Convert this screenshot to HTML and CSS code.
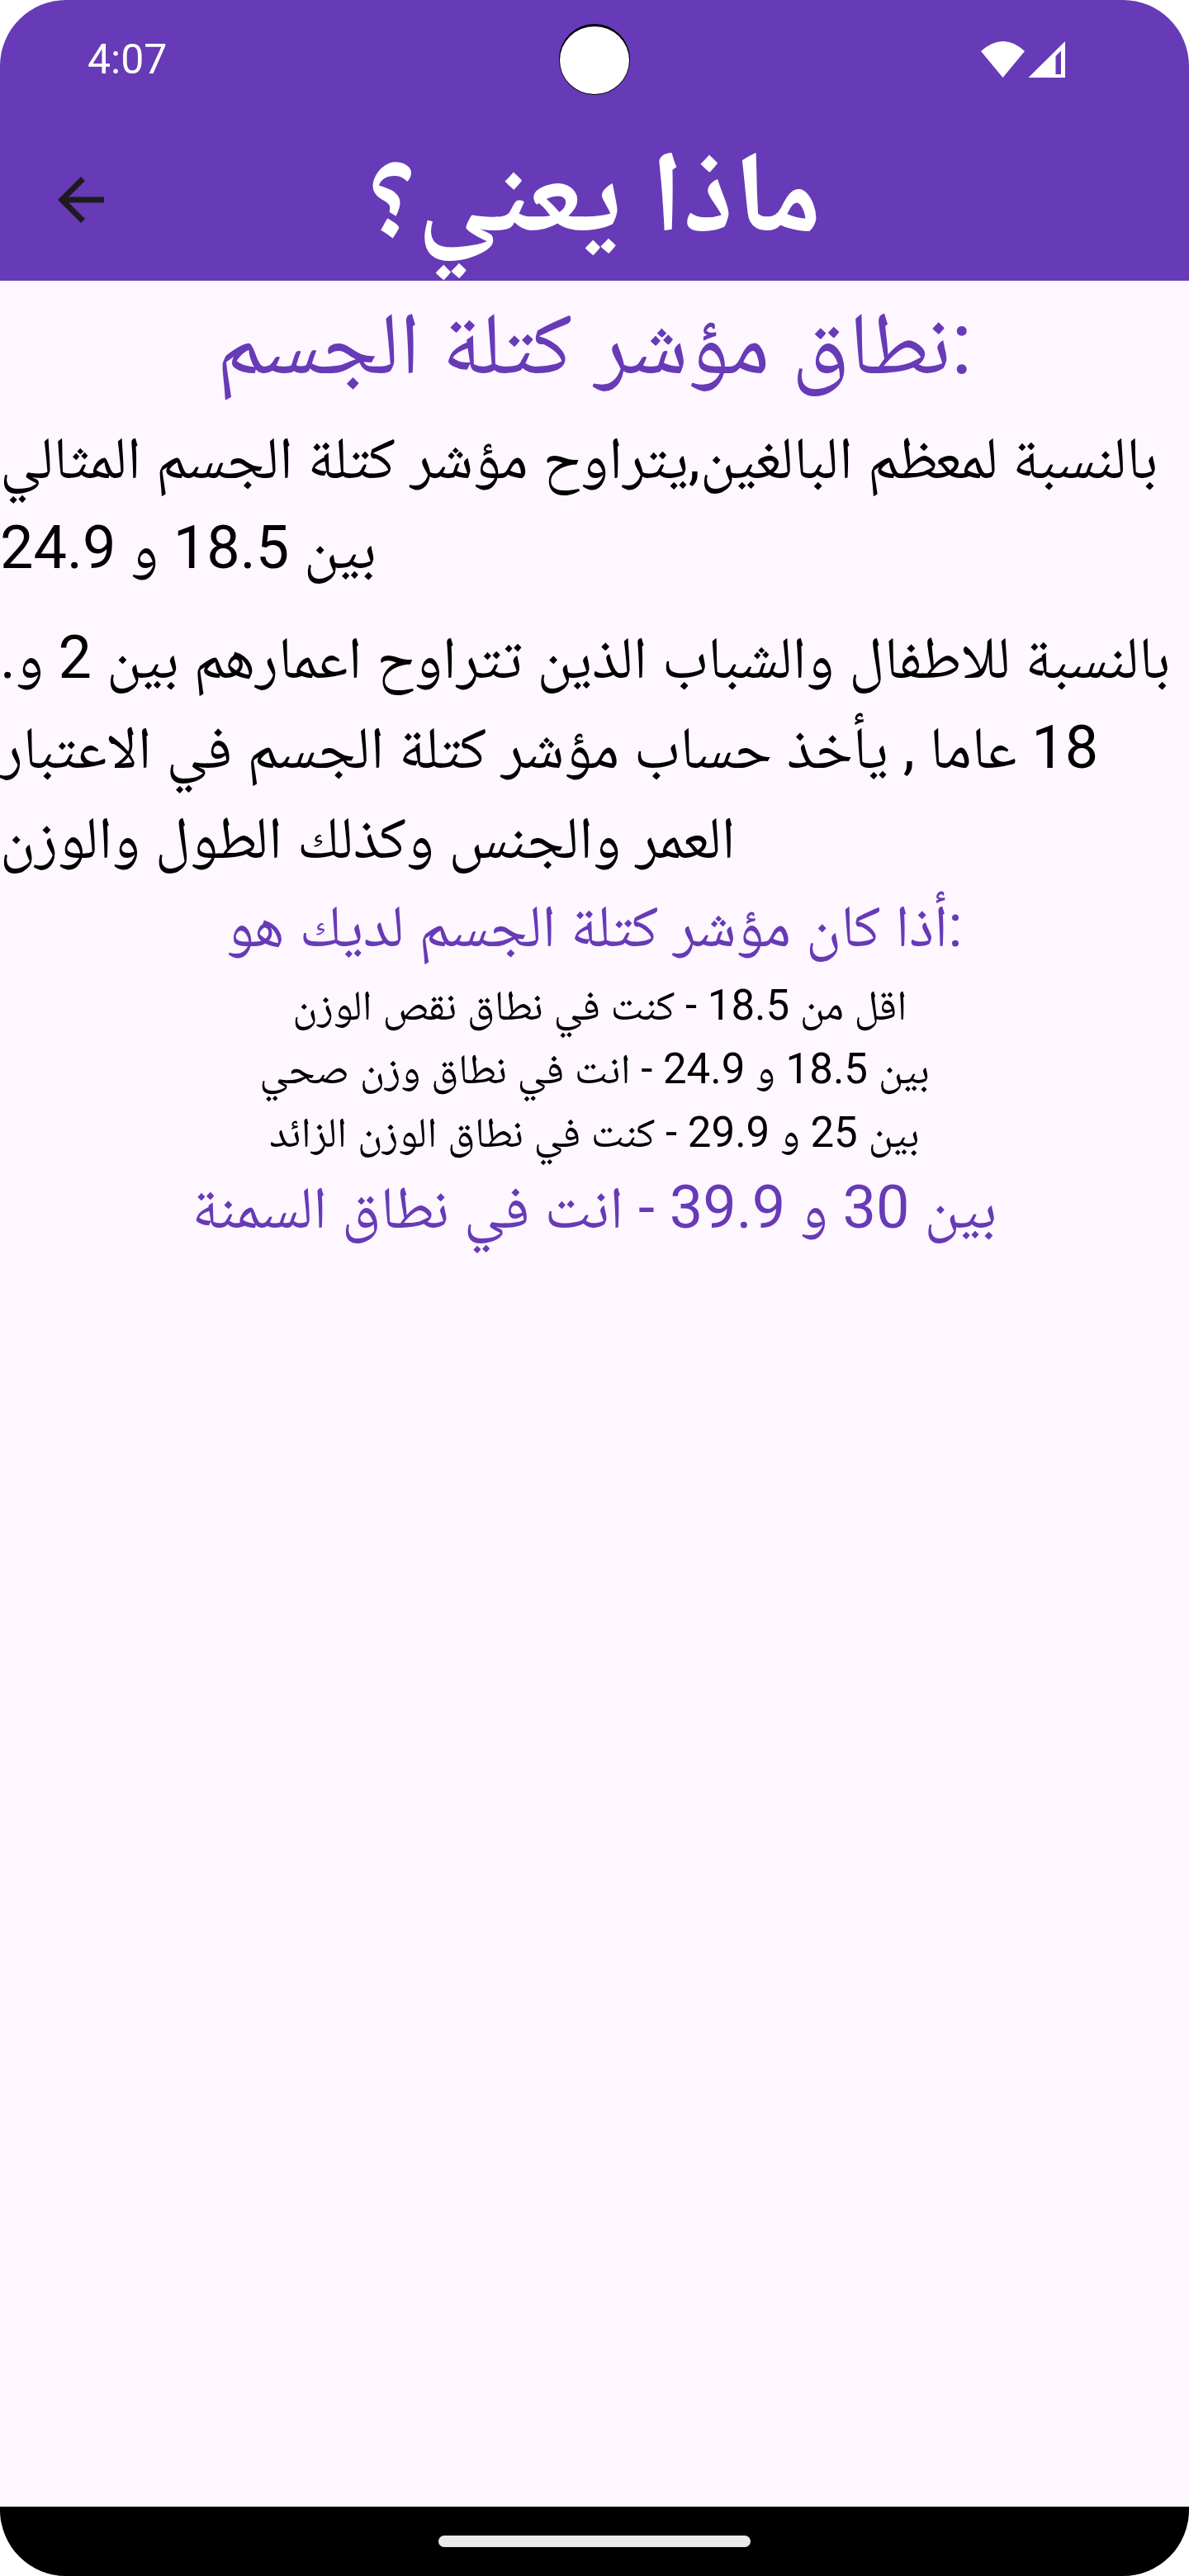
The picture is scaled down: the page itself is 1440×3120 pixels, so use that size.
FILE: index.html
```html
<!DOCTYPE html>
<html lang="ar">
<head>
<meta charset="utf-8">
<meta name="viewport" content="width=device-width, initial-scale=1">
<title>ماذا يعني؟</title>
<link rel="stylesheet" href="styles.css">
</head>
<body>
<div class="screen">
  <header class="header">
    <div class="status">
      <time class="clock">4:07</time>
      <svg class="camera" viewBox="0 0 86 86" aria-hidden="true">
        <circle cx="43" cy="43" r="43" fill="#000"/>
        <ellipse cx="43" cy="44" rx="42" ry="41" fill="#fff"/>
      </svg>
      <svg class="signals" viewBox="0 0 102 46" aria-hidden="true">
        <path fill="#fff" d="M0 13Q27-11 53 13L26.500 45Z"/>
        <path fill="#fff" fill-rule="evenodd" d="M57.500 45L102 1V45ZM90.500 19V41H97V12.500Z"/>
      </svg>
    </div>
    <div class="appbar">
      <button class="back" type="button" aria-label="رجوع">
        <svg viewBox="0 0 56 56" aria-hidden="true"><path fill="#1d1b20" d="M56 24.500H13.400L33 4.900L28 0L0 28L28 56L33 51.100L13.400 31.500H56Z"/></svg>
      </button>
      <h1 class="title">ماذا يعني؟</h1>
    </div>
  </header>
  <main class="content">
    <h2 class="heading">نطاق مؤشر كتلة الجسم:</h2>
    <p class="body">بالنسبة لمعظم البالغين,يتراوح مؤشر كتلة الجسم المثالي بين 18.5 و 24.9</p>
    <p class="body">.بالنسبة للاطفال والشباب الذين تتراوح اعمارهم بين 2 و 18 عاما , يأخذ حساب مؤشر كتلة الجسم في الاعتبار العمر والجنس وكذلك الطول والوزن</p>
    <h3 class="subheading">أذا كان مؤشر كتلة الجسم لديك هو:</h3>
    <ul class="ranges">
      <li>اقل من 18.5 - كنت في نطاق نقص الوزن&nbsp;</li>
      <li>بين 18.5 و 24.9 - انت في نطاق وزن صحي</li>
      <li>بين 25 و 29.9 - كنت في نطاق الوزن الزائد</li>
    </ul>
    <p class="subheading">بين 30 و 39.9 - انت في نطاق السمنة</p>
  </main>
  <footer class="navbar"><span class="handle"></span></footer>
</div>
</body>
</html>
```
FILE: styles.css
```css
* { box-sizing: border-box; margin: 0; padding: 0; }
body { background: #fff; color: #000; font-family: Roboto, "Noto Naskh Arabic", sans-serif; }
.screen { display: flex; flex-direction: column; min-height: 100vh; border-radius: 80px; overflow: hidden; background: #fef7ff; }
.header { background: #673ab7; color: #fff; overflow: hidden; }
.status { display: grid; grid-template-columns: 1fr auto 1fr; align-items: center; height: 144px; padding: 0 106px; }
.clock { font-size: 50px; }
.camera { width: 86px; height: 86px; }
.signals { width: 102px; height: 46px; justify-self: end; margin-right: 44px; }
.appbar { display: grid; grid-template-columns: 200px 1fr 200px; align-items: center; height: 196px; }
.back { width: 56px; height: 56px; margin-left: 70px; border: 0; background: none; }
.back svg { display: block; width: 56px; height: 56px; }
.title { align-self: start; direction: rtl; text-align: center; font-size: 140px; line-height: 176px; }
.content { flex: 1; }
.heading { margin-bottom: 9px; text-align: center; font-size: 107px; line-height: 151px; font-weight: 400; color: #673ab7; }
.body { text-align: left; font-size: 72px; line-height: 109px; }
.body + .body { margin-top: 24px; }
.subheading { text-align: center; font-size: 72px; line-height: 106px; font-weight: 400; color: #673ab7; }
p.subheading { direction: rtl; }
.ranges { padding-top: 4px; direction: rtl; text-align: center; list-style: none; font-size: 51px; line-height: 77px; }
.navbar { display: flex; align-items: center; justify-content: center; height: 84px; background: #000; }
.handle { width: 378px; height: 14px; border-radius: 7px; background: #ebebeb; }
```
